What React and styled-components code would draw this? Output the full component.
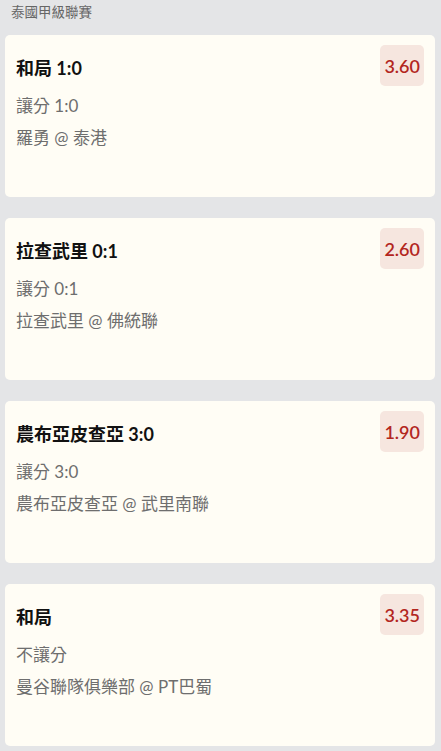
import React from 'react';
import styled, {createGlobalStyle} from 'styled-components';

const GlobalStyle = createGlobalStyle`
  body {
    margin: 0;
    background-color: #e4e5e7;
    font-family: Lato, "Noto Sans CJK TC", sans-serif;
  }
`;

const Page = styled.div`
  padding: 0 6px 0 5px;
`;

const LeagueName = styled.h2`
  color: #666666;
  font-size: 13.5px;
  font-weight: 400;
  line-height: 24px;
  margin: 0 0 11px 6px;
`;

const CardList = styled.ul`
  display: flex;
  flex-direction: column;
  gap: 21px;
  list-style: none;
  margin: 0;
  padding: 0;
`;

const Card = styled.li`
  background-color: #fffdf5;
  border-radius: 5px;
  box-sizing: border-box;
  display: flex;
  align-items: flex-start;
  height: 162px;
  padding: 10px 11px 10px 11px;
`;

const Info = styled.div`
  flex: 1;
  padding-top: 11px;
`;

const Title = styled.h3`
  color: #111111;
  font-size: 18px;
  font-weight: 700;
  line-height: 24px;
  margin: 0 0 10px;
`;

const Line = styled.p`
  color: #6e6e6e;
  font-size: 17px;
  line-height: 32px;
  margin: 0;
`;

const Odds = styled.button`
  background-color: #f6e6df;
  border: none;
  border-radius: 5px;
  color: #b3261e;
  font-family: Lato, sans-serif;
  font-size: 18px;
  font-weight: 600;
  height: 41px;
  min-width: 43px;
  padding: 0 4px;
`;

const bets = [
  {title: '和局 1:0', handicap: '讓分 1:0', match: '羅勇 @ 泰港', odds: '3.60'},
  {title: '拉查武里 0:1', handicap: '讓分 0:1', match: '拉查武里 @ 佛統聯', odds: '2.60'},
  {title: '農布亞皮查亞 3:0', handicap: '讓分 3:0', match: '農布亞皮查亞 @ 武里南聯', odds: '1.90'},
  {title: '和局', handicap: '不讓分', match: '曼谷聯隊俱樂部 @ PT巴蜀', odds: '3.35'}
];

export default function App() {
  return (
    <Page>
      <GlobalStyle />
      <LeagueName>泰國甲級聯賽</LeagueName>
      <CardList>
        {bets.map(bet => (
          <Card key={bet.match}>
            <Info>
              <Title>{bet.title}</Title>
              <Line>{bet.handicap}</Line>
              <Line>{bet.match}</Line>
            </Info>
            <Odds>{bet.odds}</Odds>
          </Card>
        ))}
      </CardList>
    </Page>
  );
}
